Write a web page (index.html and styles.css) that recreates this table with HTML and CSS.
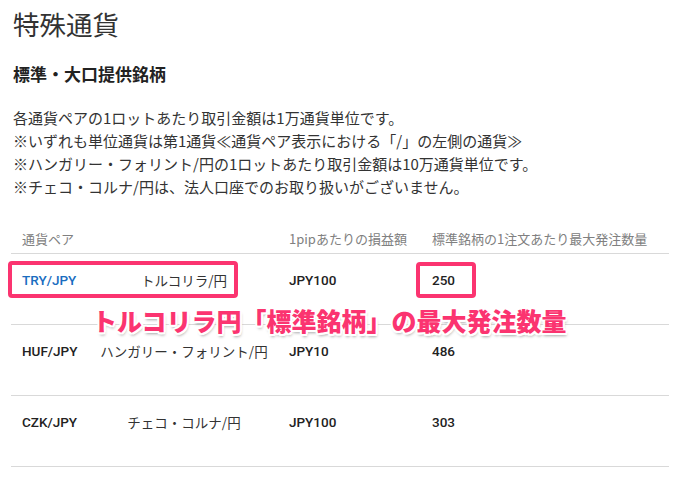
FILE: index.html
```html
<!DOCTYPE html>
<html lang="ja">
<head>
<meta charset="utf-8">
<link rel="stylesheet" href="styles.css">
</head>
<body>
<div class="page">
  <h1 class="title">特殊通貨</h1>
  <h2 class="subtitle">標準・大口提供銘柄</h2>
  <div class="notes">
    <p>各通貨ペアの1ロットあたり取引金額は1万通貨単位です。</p>
    <p>※いずれも単位通貨は第1通貨≪通貨ペア表示における「/」の左側の通貨≫</p>
    <p>※ハンガリー・フォリント/円の1ロットあたり取引金額は10万通貨単位です。</p>
    <p>※チェコ・コルナ/円は、法人口座でのお取り扱いがございません。</p>
  </div>
  <div class="table">
    <div class="row head">
      <div class="c1 span2">通貨ペア</div>
      <div class="c3">1pipあたりの損益額</div>
      <div class="c4">標準銘柄の1注文あたり最大発注数量</div>
    </div>
    <div class="row">
      <div class="c1 code link">TRY/JPY</div>
      <div class="c2">トルコリラ/円</div>
      <div class="c3 code">JPY100</div>
      <div class="c4 code">250</div>
    </div>
    <div class="row">
      <div class="c1 code">HUF/JPY</div>
      <div class="c2">ハンガリー・フォリント/円</div>
      <div class="c3 code">JPY10</div>
      <div class="c4 code">486</div>
    </div>
    <div class="row">
      <div class="c1 code">CZK/JPY</div>
      <div class="c2">チェコ・コルナ/円</div>
      <div class="c3 code">JPY100</div>
      <div class="c4 code">303</div>
    </div>
    <div class="mark mark-pair"></div>
    <div class="mark mark-num"></div>
    <div class="callout">トルコリラ円「標準銘柄」の最大発注数量</div>
  </div>
</div>
</body>
</html>
```
FILE: styles.css
```css
html, body {
  margin: 0;
  padding: 0;
  background: #fff;
}
body {
  font-family: "Noto Sans CJK JP", "Noto Sans", sans-serif;
  color: #333;
}
.page {
  padding: 6px 0 0 13px;
  width: 667px;
}
.title {
  margin: 0;
  font-size: 26.5px;
  font-weight: 400;
  line-height: 36px;
  color: #333;
}
.subtitle {
  margin: 20px 0 0 0;
  font-size: 17px;
  font-weight: 700;
  line-height: 24px;
  color: #222;
}
.notes {
  margin-top: 20px;
}
.notes p {
  margin: 0;
  font-size: 15px;
  line-height: 23px;
  color: #333;
  white-space: nowrap;
}
.table {
  position: relative;
  margin: 27px 0 0 -2px;
  width: 658px;
}
.row {
  display: grid;
  grid-template-columns: 79px 188px 143px 248px;
  border-bottom: 1px solid #d9d9d9;
  padding: 16px 0 34px 0;
  font-size: 13.5px;
  line-height: 20px;
  align-items: center;
}
.row.head {
  padding: 4px 0 4px 0;
  color: #808080;
  font-size: 13px;
}
.c1 { padding-left: 11px; }
.span2 { grid-column: span 2; }
.c2 { text-align: center; }
.c3, .c4 { padding-left: 11px; }
.code {
  font-family: Roboto, "Noto Sans", sans-serif;
  font-weight: 500;
  color: #222;
}
.link { color: #1a6dbf; }
.mark {
  position: absolute;
  border: 4px solid #fb3470;
  border-radius: 4px;
  box-sizing: border-box;
}
.mark-pair {
  left: -3px;
  top: 36px;
  width: 230px;
  height: 37px;
}
.mark-num {
  left: 405px;
  top: 37px;
  width: 60px;
  height: 36px;
}
.callout {
  position: absolute;
  left: 81px;
  top: 77px;
  font-size: 25px;
  font-weight: 900;
  line-height: 36px;
  color: #fb3470;
  white-space: nowrap;
  text-shadow:
    2px 0 0 #fff, -2px 0 0 #fff, 0 2px 0 #fff, 0 -2px 0 #fff,
    1.5px 1.5px 0 #fff, -1.5px 1.5px 0 #fff, 1.5px -1.5px 0 #fff, -1.5px -1.5px 0 #fff,
    1px 3px 3px rgba(0, 0, 0, 0.35);
}
```
